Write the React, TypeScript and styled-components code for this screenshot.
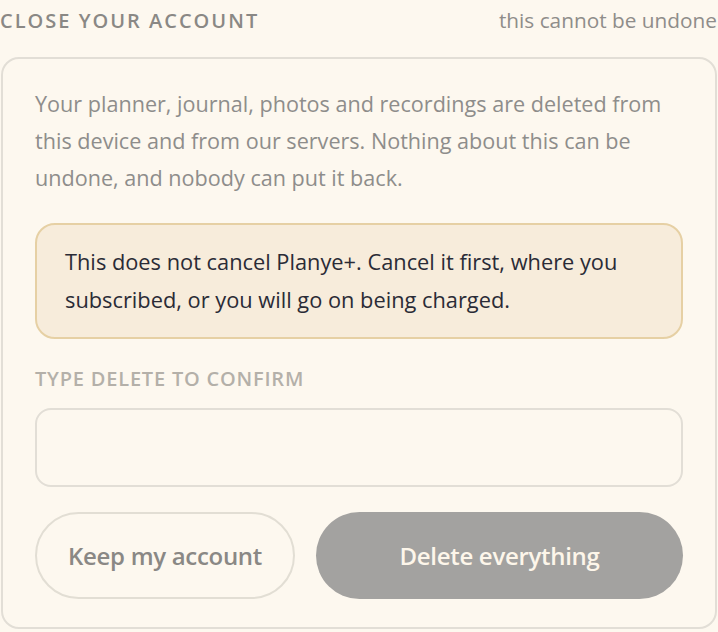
import React from "react";
import styled, { createGlobalStyle } from "styled-components";

const GlobalStyle = createGlobalStyle`
  html, body {
    margin: 0;
    padding: 0;
    background: #fdf8ef;
  }
  body {
    font-family: "Open Sans", "Noto Sans", sans-serif;
  }
`;

const CloseAccount = () => {
  return (
    <Page>
      <Header>
        <Title>Close your account</Title>
        <Hint>this cannot be undone</Hint>
      </Header>
      <Card>
        <Body>
          Your planner, journal, photos and recordings are deleted from this
          device and from our servers. Nothing about this can be undone, and
          nobody can put it back.
        </Body>
        <Notice>
          This does not cancel Planye+. Cancel it first, where you subscribed,
          or you will go on being charged.
        </Notice>
        <Field>
          <Label htmlFor="confirm">Type delete to confirm</Label>
          <Input id="confirm" type="text" />
        </Field>
        <Actions>
          <Button>Keep my account</Button>
          <Button $danger disabled>
            Delete everything
          </Button>
        </Actions>
      </Card>
    </Page>
  );
};

export default function App() {
  return (
    <>
      <GlobalStyle />
      <CloseAccount />
    </>
  );
}

const Page = styled.div`
  width: 718px;
  display: flex;
  flex-direction: column;
  gap: 17px;
`;

const Header = styled.div`
  display: flex;
  justify-content: space-between;
  align-items: center;
  height: 40px;
  padding-right: 1px;
`;

const Title = styled.h2`
  margin: 0;
  font-size: 20px;
  font-weight: 600;
  letter-spacing: 2px;
  text-transform: uppercase;
  color: #8a8885;
`;

const Hint = styled.span`
  font-size: 20.8px;
  color: #8f8d8a;
`;

const Card = styled.div`
  margin: 0 1px;
  border: 2px solid #e2ded6;
  border-radius: 18px;
  padding: 26px 32px 28px;
  display: flex;
  flex-direction: column;
`;

const Body = styled.p`
  margin: 0;
  font-size: 21.6px;
  line-height: 37px;
  color: #8e8d8b;
`;

const Notice = styled.div`
  margin-top: 27px;
  background: #f7ecdb;
  border: 2px solid #e6d0a4;
  border-radius: 20px;
  padding: 18px 28px;
  font-size: 21.8px;
  line-height: 38px;
  color: #2a2b36;
`;

const Field = styled.div`
  margin-top: 28px;
  display: flex;
  flex-direction: column;
  gap: 17px;
`;

const Label = styled.label`
  font-size: 20px;
  font-weight: 600;
  line-height: 24px;
  letter-spacing: 0.8px;
  text-transform: uppercase;
  color: #b4b0a9;
`;

const Input = styled.input`
  height: 79px;
  box-sizing: border-box;
  border: 2px solid #e2ded6;
  border-radius: 16px;
  background: transparent;
  padding: 0 20px;
  font: inherit;
  font-size: 21px;
  outline: none;
`;

const Actions = styled.div`
  margin-top: 25px;
  display: flex;
  gap: 21px;
`;

const Button = styled.button<{ $danger?: boolean }>`
  height: 87px;
  box-sizing: border-box;
  border-radius: 44px;
  font-family: inherit;
  font-size: 24px;
  font-weight: 600;
  letter-spacing: -0.3px;
  cursor: pointer;
  ${({ $danger }) =>
    $danger
      ? `
    flex: 1;
    border: none;
    background: #a3a2a0;
    color: #fdf6ea;
  `
      : `
    flex: 0 0 260px;
    border: 2px solid #e2ded4;
    background: transparent;
    color: #8a8885;
  `}
`;
